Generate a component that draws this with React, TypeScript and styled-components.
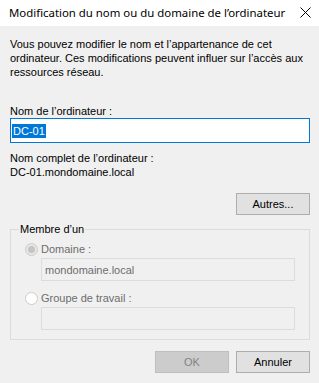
import React from 'react';
import styled, { createGlobalStyle } from 'styled-components';

const GlobalStyle = createGlobalStyle`
  html, body {
    margin: 0;
    padding: 0;
    background: #f0f0f0;
  }
  body {
    font-family: "Liberation Sans", Arial, sans-serif;
    font-size: 11px;
    color: #000;
  }
`;

const Window = styled.div`
  width: 319px;
  height: 383px;
  background: #f0f0f0;
  display: flex;
  flex-direction: column;
  overflow: hidden;
`;

const TitleBar = styled.div`
  height: 26px;
  flex: none;
  background: #ffffff;
  display: flex;
  align-items: center;
  justify-content: space-between;
  padding: 0 8px 0 9px;
`;

const TitleText = styled.span`
  font-family: "Noto Sans", "Open Sans", sans-serif;
  font-size: 11.4px;
  line-height: 16px;
  color: #000;
  margin-top: -1px;
`;

const CloseIcon = styled.svg`
  width: 11px;
  height: 11px;
  margin-top: -2px;
`;

const Body = styled.div`
  display: flex;
  flex-direction: column;
  padding: 11px 9px 0 10px;
  line-height: 14px;
`;

const Paragraph = styled.p`
  margin: 0;
`;

const Label = styled.div<{ $gap?: number }>`
  margin-top: ${p => p.$gap ?? 0}px;
`;

const NameBox = styled.div`
  height: 25px;
  box-sizing: border-box;
  border: 1px solid #0078d7;
  background: #fff;
  display: flex;
  align-items: center;
  padding-left: 1px;
`;

const Selection = styled.span`
  background: #0078d7;
  color: #fff;
  line-height: 14px;
  padding: 0 1px;
`;

const ButtonRow = styled.div<{ $gap: number }>`
  display: flex;
  justify-content: flex-end;
  gap: 7px;
  margin-top: ${p => p.$gap}px;
`;

const Button = styled.button<{ $disabled?: boolean }>`
  width: 74px;
  height: 22px;
  box-sizing: border-box;
  margin: 0;
  padding: 0;
  font-family: "Liberation Sans", Arial, sans-serif;
  font-size: 11px;
  border: 1px solid ${p => (p.$disabled ? '#bfbfbf' : '#adadad')};
  background: ${p => (p.$disabled ? '#cccccc' : '#e1e1e1')};
  color: ${p => (p.$disabled ? '#838383' : '#000')};
`;

const GroupBox = styled.fieldset`
  margin: 7px 0 0;
  padding: 0 0 9px 0;
  border: 1px solid #dcdcdc;
  min-width: 0;
`;

const Legend = styled.legend`
  margin-left: 8px;
  padding: 0 1px;
  line-height: 14px;
`;

const Option = styled.div<{ $top: number }>`
  display: flex;
  align-items: center;
  gap: 3px;
  margin: ${p => p.$top}px 0 0 14px;
  color: #6d6d6d;
  line-height: 14px;
`;

const Radio = styled.span<{ $checked?: boolean }>`
  width: 13px;
  height: 13px;
  box-sizing: border-box;
  border-radius: 50%;
  border: 1px solid #cccccc;
  background: ${p => (p.$checked ? '#e6e6e6' : '#ffffff')};
  display: flex;
  align-items: center;
  justify-content: center;
  &::after {
    content: '';
    display: ${p => (p.$checked ? 'block' : 'none')};
    width: 7px;
    height: 7px;
    border-radius: 50%;
    background: #c4c4c4;
  }
`;

const FieldBox = styled.div`
  margin: 2px 0 0 30px;
  width: 254px;
  height: 23px;
  box-sizing: border-box;
  border: 1px solid #dcdcdc;
  background: #f0f0f0;
  color: #6d6d6d;
  display: flex;
  align-items: center;
  padding-left: 3px;
`;

export default function App() {
  return (
    <>
      <GlobalStyle />
      <Window>
        <TitleBar>
          <TitleText>Modification du nom ou du domaine de l’ordinateur</TitleText>
          <CloseIcon viewBox="0 0 11 11">
            <path d="M0.5 0.5 L10.5 10.5 M10.5 0.5 L0.5 10.5" stroke="#000" strokeWidth="1" fill="none" />
          </CloseIcon>
        </TitleBar>
        <Body>
          <Paragraph>
            Vous pouvez modifier le nom et l’appartenance de cet
            <br />
            ordinateur. Ces modifications peuvent influer sur l’accès aux
            <br />
            ressources réseau.
          </Paragraph>
          <Label $gap={25}>Nom de l’ordinateur :</Label>
          <NameBox>
            <Selection>DC-01</Selection>
          </NameBox>
          <Label $gap={8}>Nom complet de l’ordinateur :</Label>
          <Label>DC-01.mondomaine.local</Label>
          <ButtonRow $gap={14}>
            <Button>Autres...</Button>
          </ButtonRow>
          <GroupBox>
            <Legend>Membre d’un</Legend>
            <Option $top={6}>
              <Radio $checked />
              <span>Domaine :</span>
            </Option>
            <FieldBox>mondomaine.local</FieldBox>
            <Option $top={10}>
              <Radio />
              <span>Groupe de travail :</span>
            </Option>
            <FieldBox />
          </GroupBox>
          <ButtonRow $gap={11}>
            <Button $disabled>OK</Button>
            <Button>Annuler</Button>
          </ButtonRow>
        </Body>
      </Window>
    </>
  );
}
